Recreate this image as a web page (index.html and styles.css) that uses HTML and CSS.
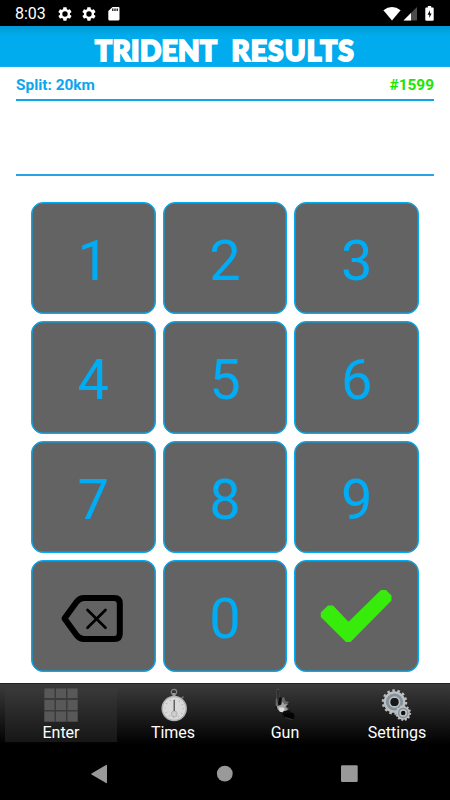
FILE: index.html
```html
<!DOCTYPE html>
<html lang="en">
<head>
  <meta charset="UTF-8">
  <meta name="viewport" content="width=device-width, initial-scale=1.0">
  <title>Trident Results</title>
  <link rel="stylesheet" href="styles.css">
</head>
<body>

  <div class="status-bar">
    <span class="clock">8:03</span>
    <svg class="status-gear" width="16" height="16" viewBox="0 0 24 24"><path fill="#fff" fill-rule="evenodd" d="M19.4 13c.1-.3.1-.6.1-1s0-.7-.1-1l2.1-1.6c.2-.2.3-.5.1-.7l-2-3.4c-.1-.3-.4-.3-.6-.3l-2.5 1c-.5-.4-1.1-.7-1.7-1L14.400 2.400c0-.2-.2-.4-.5-.4h-4c-.2 0-.4.2-.5.4L9.100 5c-.6.3-1.2.6-1.700 1L4.900 5c-.2-.1-.5 0-.6.2l-2 3.500c-.1.2-.1.5.1.6L4.500 11c0 .3-.1.6-.1 1s0 .7.1 1l-2.100 1.600c-.2.2-.2.4-.1.6l2 3.500c.1.2.4.3.6.2l2.500-1c.5.4 1.100.7 1.700 1l.4 2.600c0 .3.2.5.4.5h4c.3 0 .5-.2.5-.5l.4-2.600c.6-.3 1.200-.6 1.700-1l2.500 1c.2.1.5 0 .6-.2l2-3.500c.1-.2.1-.4-.1-.6zM12 16a4 4 0 1 1 0-8 4 4 0 0 1 0 8z"/></svg>
    <svg class="status-gear" width="16" height="16" viewBox="0 0 24 24"><path fill="#fff" fill-rule="evenodd" d="M19.4 13c.1-.3.1-.6.1-1s0-.7-.1-1l2.1-1.6c.2-.2.3-.5.1-.7l-2-3.4c-.1-.3-.4-.3-.6-.3l-2.5 1c-.5-.4-1.1-.7-1.7-1L14.400 2.400c0-.2-.2-.4-.5-.4h-4c-.2 0-.4.2-.5.4L9.100 5c-.6.3-1.2.6-1.700 1L4.900 5c-.2-.1-.5 0-.6.2l-2 3.500c-.1.2-.1.5.1.6L4.500 11c0 .3-.1.6-.1 1s0 .7.1 1l-2.100 1.600c-.2.2-.2.4-.1.6l2 3.500c.1.2.4.3.6.2l2.500-1c.5.4 1.100.7 1.700 1l.4 2.600c0 .3.2.5.4.5h4c.3 0 .5-.2.5-.5l.4-2.600c.6-.3 1.200-.6 1.700-1l2.500 1c.2.1.5 0 .6-.2l2-3.500c.1-.2.1-.4-.1-.6zM12 16a4 4 0 1 1 0-8 4 4 0 0 1 0 8z"/></svg>
    <svg width="12" height="15" viewBox="0 0 12 15"><path fill="#fff" d="M4.500 1H10.500Q11.500 1 11.500 2V13Q11.500 14.500 10.200 14.500H1.500Q.3 14.500.3 13V5z"/><path stroke="#000" stroke-width="1.200" d="M4.800 2.500v2.500M7 2.500v2.500M9.200 2.500v2.500"/></svg>
    <div class="status-right">
      <svg width="18" height="14" viewBox="0 0 18 14"><path fill="#fff" d="M.4 3.200Q4.500 0 9 0t8.600 3.200L9 13.600z"/></svg>
      <svg width="14" height="14" viewBox="0 0 14 14"><path fill="#4d4d4d" d="M14 0v13.500H.5z"/><path fill="#fff" d="M8 6v7.500H.5z"/></svg>
      <svg class="battery" width="9" height="15" viewBox="0 0 9 15"><path fill="#fff" d="M2.800 0h3.400v1.400H8q.7 0 .7 1V14q0 .8-1 .8H1.300q-1 0-1-.8V2.400q0-1 1-1h1.500z"/><path fill="#000" d="M5 4.200 2.500 8.700h1.800v3.300L6.600 7.400H5z"/></svg>
    </div>
  </div>

  <h1 class="header"><span class="trident">TRIDENT</span><span class="results">RESULTS</span></h1>

  <div class="info">
    <span>Split: 20km</span>
    <span class="count">#1599</span>
  </div>
  <div class="entry"></div>

  <div class="keypad">
    <button class="key">1</button>
    <button class="key">2</button>
    <button class="key">3</button>
    <button class="key">4</button>
    <button class="key">5</button>
    <button class="key">6</button>
    <button class="key">7</button>
    <button class="key">8</button>
    <button class="key">9</button>
    <button class="key icon-key" aria-label="Delete">
      <svg width="123" height="110" viewBox="32 561 123 110" fill="none" stroke="#000">
        <path stroke-width="6" stroke-linejoin="round" d="M84 598h30.500q5.300 0 5.300 5.500v30q0 5.500-5.300 5.500H84q-4.500 0-7.500-4L64.500 618.500 76.500 602q3-4 7.500-4z"/>
        <path stroke-width="2.700" stroke-linecap="round" d="M87.500 610l18 17.800M105.500 610l-18 17.800"/>
      </svg>
    </button>
    <button class="key">0</button>
    <button class="key icon-key" aria-label="Enter">
      <svg width="123" height="110" viewBox="295.5 561 123 110">
        <path fill="#37ec0b" d="M321.300 612.500 328.500 605.500h5L349 621.800 381.500 590h5L392 595.500v5L351 642h-4.500L321.300 617z"/>
      </svg>
    </button>
  </div>

  <div class="tabs">
    <div class="tab active">
      <svg width="34" height="34" viewBox="0 0 34 34">
        <path fill="#3b3b3b" d="M0 0h34v34H0z"/>
        <path fill="#585858" d="M.5.5h10v9.500h-10zM12 .5h10v9.500H12zM23.500.5h10v9.500h-10zM.5 12h10v10h-10zM12 12h10v10H12zM23.500 12h10v10h-10zM.5 23.500h10v10h-10zM12 23.500h10v10H12zM23.500 23.500h10v10h-10z"/>
      </svg>
      <span>Enter</span>
    </div>
    <div class="tab">
      <svg width="34" height="34" viewBox="0 0 34 34">
        <circle cx="18" cy="4" r="2.700" fill="none" stroke="#858585" stroke-width="1.200"/>
        <path stroke="#999" stroke-width="3" d="M18 5v4"/>
        <path stroke="#777" stroke-width="1.500" d="M25 11l2.500-2.500"/>
        <circle cx="18.200" cy="20.500" r="12" fill="#d9d9d9" stroke="#b0b0b0" stroke-width="1.500"/>
        <circle cx="18.200" cy="20.500" r="9" fill="none" stroke="#aaa" stroke-width="1.500" stroke-dasharray=".8 3.912"/>
        <circle cx="18.200" cy="26" r="3" fill="#ccc" stroke="#aaa" stroke-width=".8"/>
        <path stroke="#444" stroke-width="1.200" d="M18.200 12v11"/>
      </svg>
      <span>Times</span>
    </div>
    <div class="tab">
      <svg width="34" height="34" viewBox="0 0 34 34">
        <path fill="#0c0c0c" d="M7 11l5-2 7 5 1 8 6 4q2 2-.5 5l-8-1-5-6-5-4z"/>
        <path fill="#4c4c4c" d="M8.500 1l2.500-.5.5 8-1.500 6H8z"/>
        <path fill="#111" d="M9.500 2h1v8l-1 5z"/>
        <path fill="#666" d="M7.500 11l1.500-1 1.500 8H7.500zM14 10l2-1 1.500 4 3.500 1-3 4 3 3-5 2-3-6z"/>
        <path fill="#a5a5a5" d="M8.500 18.500l5-2 1-3 2 3 3.500-.5-3 3 3 3-7 2-3-2z"/>
        <path fill="#dedede" d="M11 19.500l4.500 0 1 2-2 3-3-1z"/>
        <path fill="#030303" d="M16 26l9-1q1.500 3-.5 6.500l-8-2z"/>
        <path fill="none" stroke="#444" stroke-width=".8" d="M17 29.500l7.500 2.200"/>
      </svg>
      <span>Gun</span>
    </div>
    <div class="tab">
      <svg width="34" height="34" viewBox="0 0 34 34">
        <circle cx="14.500" cy="14" r="11.500" fill="none" stroke="#bbb" stroke-width="2.500" stroke-dasharray="2.600 2.561"/>
        <circle cx="14.500" cy="14" r="7.400" fill="none" stroke="#bdc0c2" stroke-width="6.800"/>
        <circle cx="14.500" cy="14" r="7.200" fill="none" stroke="#84929b" stroke-width="2.800"/>
        <circle cx="14.500" cy="14" r="4" fill="#181818"/>
        <circle cx="23.200" cy="25" r="7" fill="none" stroke="#bbb" stroke-width="1.800" stroke-dasharray="1.900 1.765"/>
        <circle cx="23.200" cy="25" r="4.400" fill="none" stroke="#c2c4c5" stroke-width="4.600"/>
        <circle cx="23.200" cy="25" r="4.600" fill="none" stroke="#84929b" stroke-width="1.600"/>
        <circle cx="23.200" cy="25" r="2.200" fill="#111"/>
      </svg>
      <span>Settings</span>
    </div>
  </div>

  <div class="system-nav">
    <svg width="450" height="53" viewBox="0 0 450 53" fill="#999">
      <path d="M106 18q1-.5 1 .5v17q0 1-1 .5L91.500 27.500q-.7-.5 0-1z"/>
      <circle cx="224.800" cy="26.700" r="7.900"/>
      <rect x="341" y="18.200" width="16.700" height="16.800" rx="1.200"/>
    </svg>
  </div>

</body>
</html>
```
FILE: styles.css
```css
* {
  box-sizing: border-box;
}
body {
  font-family: Roboto, "Liberation Sans", sans-serif;
  display: flex;
  flex-direction: column;
  height: 800px;
  margin: 0;
  background-color: #fff;
  overflow: hidden;
}
svg {
  display: block;
  flex: none;
}
.status-bar {
  display: flex;
  align-items: center;
  height: 26px;
  padding: 1px 16px 0 15px;
  background: #000;
  color: #fff;
}
.clock {
  width: 35px;
  margin-right: 7px;
  font-size: 16px;
  line-height: 26px;
  white-space: nowrap;
}
.status-gear {
  margin-right: 8px;
}
.status-gear + svg:not(.status-gear) {
  margin-left: 3px;
}
.status-right {
  display: flex;
  align-items: center;
  margin-left: auto;
  gap: 2px;
}
.battery {
  margin-left: 6px;
}
.header {
  display: flex;
  justify-content: center;
  gap: 14px;
  height: 41px;
  margin: 0;
  padding-top: 4px;
  background: linear-gradient(#039bd6, #00acee 11px);
  border-bottom: 1px solid #14aef0;
  color: #fff;
  font-family: Lato, sans-serif;
  font-size: 28px;
  font-weight: 900;
  line-height: 40px;
  -webkit-text-stroke: 2px #fff;
}
.trident {
  letter-spacing: 0.4px;
}
.results {
  letter-spacing: 1.2px;
}
.info {
  display: flex;
  justify-content: space-between;
  height: 34px;
  margin: 0 16px;
  border-bottom: 2px solid #0ba6ed;
  color: #0ba6ed;
  font-size: 15.4px;
  font-weight: 700;
  line-height: 36px;
}
.count {
  color: #1be600;
}
.entry {
  height: 75px;
  margin: 0 16px;
  border-bottom: 2px solid #2ba2e6;
}
.keypad {
  display: grid;
  grid-template-columns: repeat(3, 1fr);
  grid-template-rows: repeat(4, 1fr);
  gap: 7px;
  height: 470px;
  margin: 26px 31px 11px;
}
.key {
  display: flex;
  align-items: center;
  justify-content: center;
  padding: 6px 0 0;
  background: #636363;
  border: 1px solid #00acf4;
  border-radius: 12px;
  box-shadow: inset 0 0 0 0.5px #00acf4;
  color: #00acf4;
  font-family: inherit;
  font-size: 56px;
  overflow: hidden;
}
.icon-key {
  padding: 0;
}
.tabs {
  display: flex;
  height: 64px;
  padding: 4px 0 5px 5px;
  background: linear-gradient(#3b3b3b, #000 61px);
  border-top: 1px solid #222;
  overflow: hidden;
}
.tab {
  display: flex;
  flex: none;
  flex-direction: column;
  align-items: center;
  width: 112px;
  color: #fff;
  font-size: 16px;
  line-height: 21px;
}
.active {
  background: linear-gradient(rgba(255, 255, 255, 0.01), rgba(255, 255, 255, 0.08));
}
.system-nav {
  height: 53px;
  background: #000;
}
```
